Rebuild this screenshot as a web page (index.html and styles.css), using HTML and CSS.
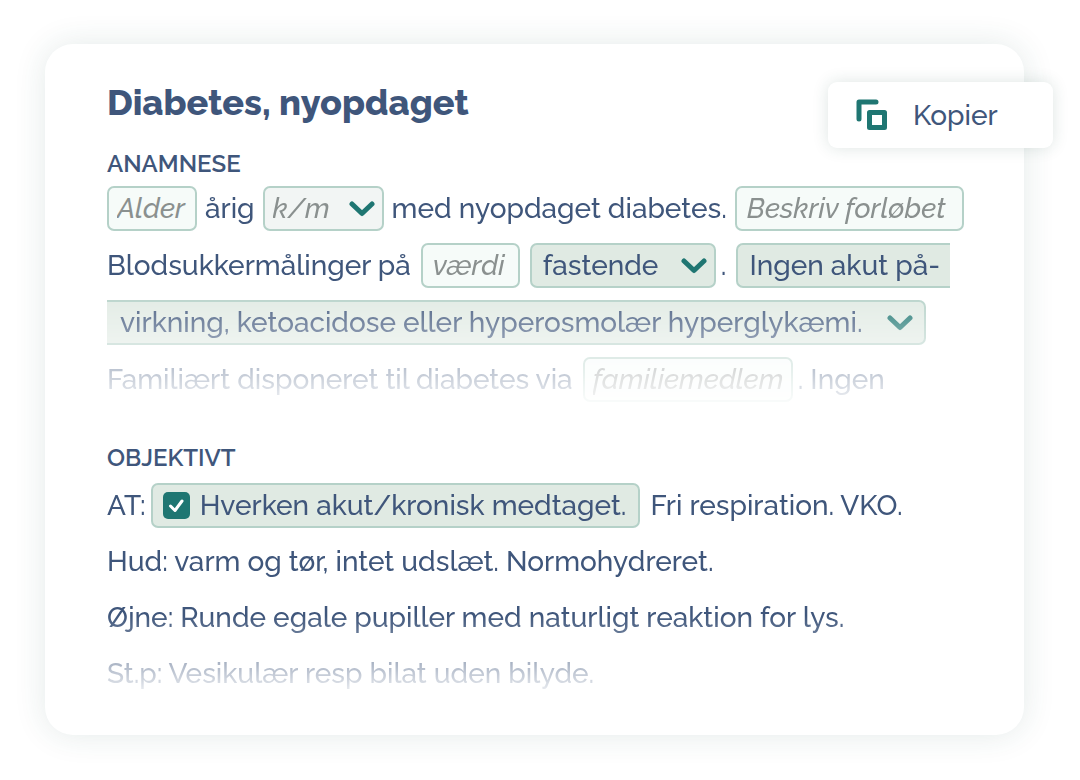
FILE: index.html
```html
<!DOCTYPE html>
<html lang="da">
<head>
    <meta charset="UTF-8">
    <meta name="viewport" content="width=device-width, initial-scale=1.0">
    <title>Diabetes, nyopdaget</title>
    <link rel="stylesheet" href="styles.css">
</head>
<body>
    <main class="card">
        <button class="copy" type="button">
            <svg class="copy-icon" viewBox="0 0 32 32" aria-hidden="true">
                <path d="M3 20V3h17" fill="none" stroke="currentColor" stroke-width="5" stroke-linecap="round" stroke-linejoin="round"/>
                <rect x="13.5" y="13.5" width="15" height="15" fill="none" stroke="currentColor" stroke-width="5" stroke-linejoin="round"/>
            </svg>
            Kopier
        </button>

        <h1>Diabetes, nyopdaget</h1>

        <section>
            <h2>ANAMNESE</h2>
            <div class="lines fade-long">
                <div class="line tight">
                    <input class="field age" type="text" placeholder="Alder" aria-label="Alder">
                    <span>årig</span>
                    <span class="dropdown">
                        <select class="field gender" aria-label="Køn">
                            <option>k/m</option>
                        </select>
                        <svg class="arrow" viewBox="0 0 26 16" aria-hidden="true"><path d="M3 3l10 9.500L23 3"/></svg>
                    </span>
                    <span>med nyopdaget diabetes.</span>
                    <input class="field course" type="text" placeholder="Beskriv forløbet" aria-label="Beskriv forløbet">
                </div>
                <div class="line">
                    <span>Blodsukkermålinger på</span>
                    <input class="field value" type="text" placeholder="værdi" aria-label="Værdi">
                    <span class="dropdown">
                        <select class="field filled fasting" aria-label="Måling">
                            <option>fastende</option>
                        </select>
                        <svg class="arrow" viewBox="0 0 26 16" aria-hidden="true"><path d="M3 3l10 9.500L23 3"/></svg>
                    </span>
                    <span class="stop">.</span>
                    <button class="field filled split-start" type="button">Ingen akut på-</button>
                </div>
                <div class="line">
                    <button class="field filled split-end" type="button">
                        virkning, ketoacidose eller hyperosmolær hyperglykæmi.
                        <svg class="arrow-inline" viewBox="0 0 26 16" aria-hidden="true"><path d="M3 3l10 9.500L23 3"/></svg>
                    </button>
                </div>
                <div class="line">
                    <span>Familiært disponeret til diabetes via</span>
                    <input class="field family" type="text" placeholder="familiemedlem" aria-label="Familiemedlem">
                    <span class="stop">. Ingen</span>
                </div>
            </div>
        </section>

        <section>
            <h2>OBJEKTIVT</h2>
            <div class="lines fade-short">
                <div class="line">
                    <span class="prefix">AT:</span>
                    <label class="field filled check">
                        <input type="checkbox" checked>
                        <svg class="tick" viewBox="0 0 27 27" aria-hidden="true"><path d="M7.500 14l4.500 4.500L19 9"/></svg>
                        Hverken akut/kronisk medtaget.
                    </label>
                    <span>Fri respiration. VKO.</span>
                </div>
                <div class="line">Hud: varm og tør, intet udslæt. Normohydreret.</div>
                <div class="line">Øjne: Runde egale pupiller med naturligt reaktion for lys.</div>
                <div class="line">St.p: Vesikulær resp bilat uden bilyde.</div>
            </div>
        </section>
    </main>
</body>
</html>
```

FILE: styles.css
```css
* {
    box-sizing: border-box;
}
body {
    margin: 0;
    padding: 44px 56px 44px 45px;
    background: #fff;
    color: #3f567b;
    font-family: Raleway, Lato, sans-serif;
    font-size: 28px;
    font-weight: 500;
    line-height: 45px;
}
.card {
    position: relative;
    padding: 36px 56px 39px 62px;
    border-radius: 28px;
    background: #fff;
    box-shadow: 0 0 32px rgba(32, 80, 70, 0.12);
}
h1 {
    margin: 0;
    font-size: 36px;
    font-weight: 800;
    line-height: 44px;
}
h2 {
    margin: 0;
    font-size: 24px;
    font-weight: 600;
    line-height: 28px;
}
section {
    padding-top: 26px;
}
section + section {
    padding-top: 42px;
}
.lines {
    display: flex;
    flex-direction: column;
    gap: 12px;
    padding-top: 8px;
}
.fade-long {
    mask-image: linear-gradient(#000 48%, transparent 105%);
}
.fade-short {
    gap: 11px;
    padding-top: 11px;
    mask-image: linear-gradient(#000 64%, transparent 102%);
}
.line {
    display: flex;
    align-items: center;
    gap: 10px;
    height: 45px;
    white-space: nowrap;
}
.tight {
    gap: 8px;
}
.stop {
    margin-left: -5px;
}
.prefix {
    margin-right: -5px;
}

/* fields inside the text */
.field {
    height: 45px;
    padding: 0 10px;
    border: 2px solid #b5d1c8;
    border-radius: 7px;
    background: #f6fbf9;
    color: inherit;
    font: inherit;
    line-height: 41px;
}
.field::placeholder {
    color: #8a908f;
    font-style: italic;
    opacity: 1;
}
.filled {
    background: #e0eae3;
}
.age {
    width: 90px;
    padding: 0 8px;
}
.course {
    width: 229px;
}
.value {
    width: 99px;
}
.family {
    width: 210px;
    padding: 0 8px;
}
.dropdown {
    position: relative;
    display: flex;
}
select.field {
    appearance: none;
}
.gender {
    width: 121px;
    padding: 0 8px;
    background: #f2f5f4;
    color: #8a908f;
    font-style: italic;
}
.fasting {
    width: 186px;
    padding: 0 11px;
}
.arrow,
.arrow-inline {
    width: 26px;
    height: 16px;
    fill: none;
    stroke: #1f7672;
    stroke-width: 5;
    stroke-linecap: round;
    stroke-linejoin: round;
}
.arrow {
    position: absolute;
    top: 15px;
    right: 9px;
    pointer-events: none;
}
.split-start {
    width: 214px;
    padding: 0 11px;
    border-right: 0;
    border-radius: 7px 0 0 7px;
    text-align: left;
}
.split-end {
    display: flex;
    align-items: center;
    justify-content: space-between;
    width: 819px;
    padding: 0 11px 0 13px;
    border-left: 0;
    border-radius: 0 7px 7px 0;
}

.check {
    position: relative;
    display: flex;
    align-items: center;
    padding: 0 12px 0 10px;
}
.check input {
    appearance: none;
    width: 27px;
    height: 27px;
    margin: 0 10px 0 0;
    border-radius: 5px;
    background: #1f7672;
}
.tick {
    position: absolute;
    left: 10px;
    width: 27px;
    height: 27px;
    fill: none;
    stroke: #fff;
    stroke-width: 3;
    stroke-linecap: round;
    stroke-linejoin: round;
    pointer-events: none;
}

.copy {
    position: absolute;
    top: 38px;
    right: -29px;
    display: flex;
    align-items: center;
    gap: 25px;
    width: 225px;
    height: 66px;
    padding: 0 28px;
    border: 0;
    border-radius: 9px;
    background: #fff;
    box-shadow: 0 0 16px rgba(32, 80, 70, 0.15);
    color: inherit;
    font: inherit;
}
.copy-icon {
    width: 32px;
    height: 32px;
    color: #1f7672;
}
```
